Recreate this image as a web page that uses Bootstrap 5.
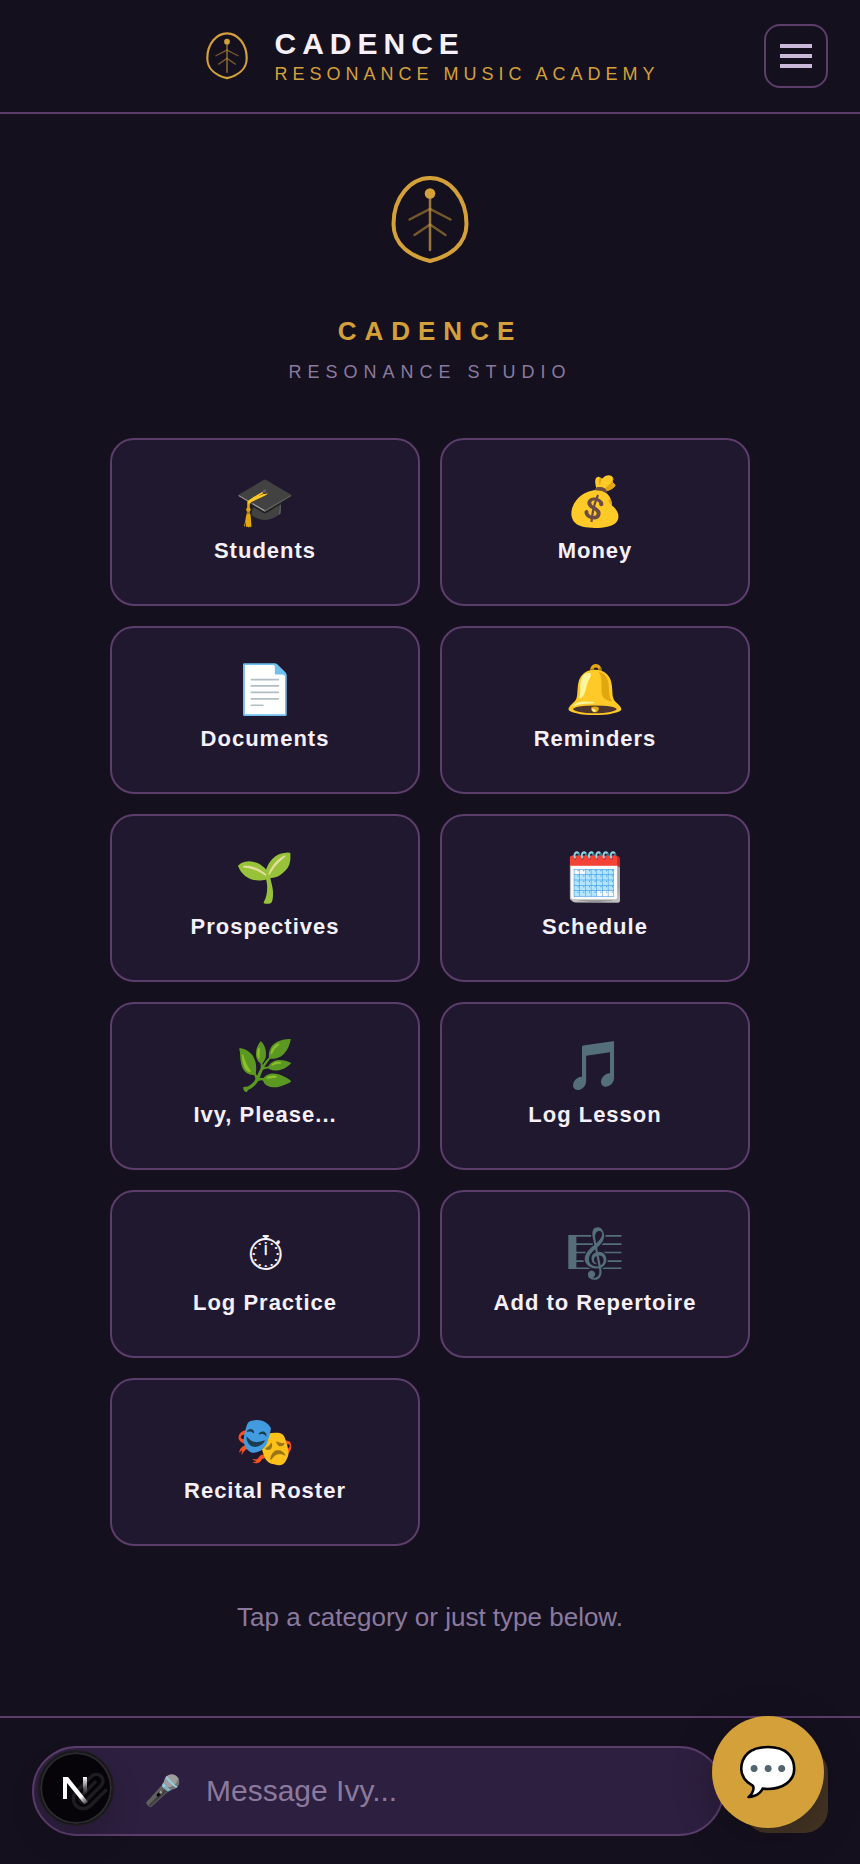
<!DOCTYPE html>
<html lang="en">
<head>
<meta charset="utf-8">
<meta name="viewport" content="width=device-width, initial-scale=1">
<title>Cadence</title>
<link href="https://cdn.jsdelivr.net/npm/bootstrap@5.3.0/dist/css/bootstrap.min.css" rel="stylesheet">
<style>
:root{--bg:#15101e;--panel:#20182f;--field:#2d1f3f;--line:#5c3d6b;--gold:#d4a039;--ink:#f5f0fa;--muted:#8b7a9e}
body{background:var(--bg);color:var(--ink);font-family:"Liberation Sans",Arial,sans-serif}
.topbar{padding:24px 32px;border-bottom:2px solid var(--line)}
.topbar-side{width:64px}
.brand{gap:20px}
.brand-name{font-size:30px;line-height:34px;letter-spacing:6px;font-weight:700}
.brand-sub{font-size:18px;line-height:22px;letter-spacing:5px;color:var(--gold);margin-top:2px}
.menu-btn{width:64px;height:64px;border:2px solid var(--line);border-radius:16px;background:none;gap:6px}
.menu-btn span{width:32px;height:4px;background:#c9b8d8}
.home{padding:56px 24px 48px}
.hero-name{font-size:26px;line-height:32px;letter-spacing:8px;font-weight:700;color:var(--gold);margin:45px 0 13px}
.hero-sub{font-size:18px;line-height:24px;letter-spacing:6px;color:var(--muted);margin:0 0 54px}
.tiles-wrap{max-width:640px}
.tiles-row{--bs-gutter-x:20px;--bs-gutter-y:20px}
.tile{height:168px;padding:32px 16px 0;border:2px solid var(--line);border-radius:24px;background:var(--panel);color:var(--ink)}
.tile-icon{font-size:48px;line-height:60px}
.tile-label{font-size:22px;line-height:28px;letter-spacing:1px;font-weight:700;margin-top:5px}
.hint{font-size:26px;line-height:32px;color:var(--muted);margin:55px 0 0}
.composer{padding:28px 32px;border-top:2px solid var(--line);gap:20px}
.pill{height:90px;border:2px solid var(--line);border-radius:45px;background:var(--field);padding:0 28px;gap:16px}
.tool-btn{border:0;background:none;padding:0;font-size:30px;line-height:40px;width:56px;color:#c9b8d8}
.msg{border:0;background:none;color:var(--ink);font-size:30px;line-height:40px;padding:0;outline:0;min-width:0}
.msg::placeholder{color:var(--muted);opacity:1}
.send{width:84px;height:84px;border:0;border-radius:24px;background:var(--gold);opacity:.25}
.fab{position:fixed;right:36px;bottom:36px;width:112px;height:112px;border:0;border-radius:50%;background:var(--gold);font-size:48px;line-height:60px;padding:0;box-shadow:0 8px 40px rgba(0,0,0,.25)}
.dev-badge{position:fixed;left:38px;bottom:38px;width:76px;height:76px;border-radius:50%;border:2px solid #1b1a1d;background:rgba(0,0,0,.85);box-shadow:inset 0 0 0 2px #2b2a2e,0 16px 32px rgba(0,0,0,.14);padding:0}
</style>
</head>
<body class="min-vh-100 d-flex flex-column">
<svg width="0" height="0" class="position-absolute" aria-hidden="true">
  <symbol id="leaf" viewBox="0 0 100 100">
    <g fill="none" stroke="#d4a039" stroke-linecap="round">
      <path stroke-width="4" stroke-linejoin="round" d="M50 8C69 8 86.500 27 86.500 54C86.500 75 69 86.500 50 91C31 86.500 13.500 75 13.500 54C13.500 27 31 8 50 8Z"/>
      <path stroke-width="2.500" opacity=".7" d="M50 24V80"/>
      <path stroke-width="2.500" opacity=".5" d="M29.500 49.500L50 39L70.500 49.500M34.500 65L50 54.500L65.500 65"/>
    </g>
    <circle cx="50" cy="23.500" r="5.300" fill="#d4a039"/>
  </symbol>
</svg>

<header class="topbar d-flex align-items-center justify-content-between">
  <div class="topbar-side"></div>
  <div class="brand d-flex align-items-center">
    <svg class="flex-shrink-0" width="54" height="54" aria-hidden="true"><use href="#leaf"/></svg>
    <div class="text-nowrap">
      <div class="brand-name">CADENCE</div>
      <div class="brand-sub">RESONANCE MUSIC ACADEMY</div>
    </div>
  </div>
  <button class="menu-btn d-flex flex-column align-items-center justify-content-center p-0" type="button" aria-label="Menu"><span></span><span></span><span></span></button>
</header>

<main class="home flex-grow-1 text-center">
  <svg class="d-block mx-auto" width="100" height="100" aria-hidden="true"><use href="#leaf"/></svg>
  <h1 class="hero-name">CADENCE</h1>
  <p class="hero-sub">RESONANCE STUDIO</p>
  <div class="tiles-wrap mx-auto">
    <div class="tiles-row row row-cols-2">
      <div class="col"><button type="button" class="tile w-100 d-flex flex-column align-items-center"><span class="tile-icon">🎓</span><span class="tile-label">Students</span></button></div>
      <div class="col"><button type="button" class="tile w-100 d-flex flex-column align-items-center"><span class="tile-icon">💰</span><span class="tile-label">Money</span></button></div>
      <div class="col"><button type="button" class="tile w-100 d-flex flex-column align-items-center"><span class="tile-icon">📄</span><span class="tile-label">Documents</span></button></div>
      <div class="col"><button type="button" class="tile w-100 d-flex flex-column align-items-center"><span class="tile-icon">🔔</span><span class="tile-label">Reminders</span></button></div>
      <div class="col"><button type="button" class="tile w-100 d-flex flex-column align-items-center"><span class="tile-icon">🌱</span><span class="tile-label">Prospectives</span></button></div>
      <div class="col"><button type="button" class="tile w-100 d-flex flex-column align-items-center"><span class="tile-icon">🗓️</span><span class="tile-label">Schedule</span></button></div>
      <div class="col"><button type="button" class="tile w-100 d-flex flex-column align-items-center"><span class="tile-icon">🌿</span><span class="tile-label">Ivy, Please...</span></button></div>
      <div class="col"><button type="button" class="tile w-100 d-flex flex-column align-items-center"><span class="tile-icon">🎵</span><span class="tile-label">Log Lesson</span></button></div>
      <div class="col"><button type="button" class="tile w-100 d-flex flex-column align-items-center"><span class="tile-icon">⏱</span><span class="tile-label">Log Practice</span></button></div>
      <div class="col"><button type="button" class="tile w-100 d-flex flex-column align-items-center"><span class="tile-icon">🎼</span><span class="tile-label">Add to Repertoire</span></button></div>
      <div class="col"><button type="button" class="tile w-100 d-flex flex-column align-items-center"><span class="tile-icon">🎭</span><span class="tile-label">Recital Roster</span></button></div>
    </div>
  </div>
  <p class="hint">Tap a category or just type below.</p>
</main>

<form class="composer d-flex align-items-center">
  <div class="pill d-flex align-items-center flex-grow-1">
    <button class="tool-btn flex-shrink-0" type="button" aria-label="Attach a file"><svg width="40" height="40" viewBox="0 0 24 24" fill="none" stroke="currentColor" stroke-width="2" stroke-linecap="round" stroke-linejoin="round" aria-hidden="true"><path d="M21.440 11.050l-9.190 9.190a6 6 0 0 1-8.490-8.490l9.190-9.190a4 4 0 0 1 5.660 5.660l-9.200 9.190a2 2 0 0 1-2.830-2.830l8.490-8.480"/></svg></button>
    <button class="tool-btn flex-shrink-0" type="button" aria-label="Voice input">🎤</button>
    <input class="msg flex-grow-1" type="text" placeholder="Message Ivy..." aria-label="Message Ivy">
  </div>
  <button class="send flex-shrink-0" type="button" aria-label="Send" disabled></button>
</form>

<button class="fab" type="button" aria-label="Chat">💬</button>
<button class="dev-badge d-flex align-items-center justify-content-center" type="button" aria-label="Developer tools">
  <svg width="72" height="72" viewBox="0 0 72 72" fill="none" aria-hidden="true">
    <defs>
      <linearGradient id="fadeDiag" x1="37" y1="39" x2="47" y2="53" gradientUnits="userSpaceOnUse"><stop stop-color="#fff"/><stop offset=".4" stop-color="#fff"/><stop offset="1" stop-color="#fff" stop-opacity="0"/></linearGradient>
      <linearGradient id="fadeStem" x1="45" y1="25" x2="45" y2="42" gradientUnits="userSpaceOnUse"><stop stop-color="#fff"/><stop offset="1" stop-color="#fff" stop-opacity="0"/></linearGradient>
    </defs>
    <path d="M23 25H28L48 50L44.500 52.500L27 31V47H23Z" fill="url(#fadeDiag)"/>
    <path d="M45 25V42" stroke="url(#fadeStem)" stroke-width="4"/>
  </svg>
</button>
<script src="https://cdn.jsdelivr.net/npm/bootstrap@5.3.0/dist/js/bootstrap.bundle.min.js"></script>
</body>
</html>
